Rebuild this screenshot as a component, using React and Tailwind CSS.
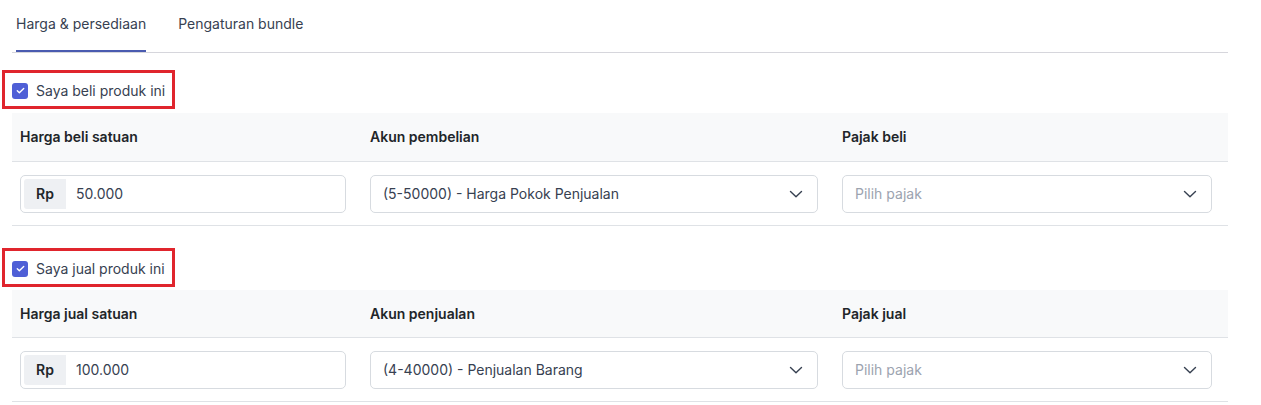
import React from 'react';

const Chevron = () => (
  <svg width="14" height="14" viewBox="0 0 14 14" fill="none" stroke="#374151" strokeWidth="1.4" strokeLinecap="round" strokeLinejoin="round">
    <path d="M1.5 4.5L7 9.8l5.5-5.3" />
  </svg>
);

const CheckLabel = ({ label }) => (
  <div className="ml-[2px] flex h-[39px] w-[173px] items-center border-[3px] border-[#e0252d] pl-[7px] pt-[2px]">
    <span className="flex h-4 w-4 items-center justify-center rounded-[3px] bg-[#4f5fd6]">
      <svg width="11" height="11" viewBox="0 0 24 24" fill="none" stroke="white" strokeWidth="3" strokeLinecap="round" strokeLinejoin="round">
        <path d="M5 12.5l4.5 4.5L19 7.5" />
      </svg>
    </span>
    <span className="ml-2 text-sm text-[#374151]">{label}</span>
  </div>
);

const Section = ({ label, cols, price, account, headClass }) => (
  <div>
    <CheckLabel label={label} />
    <div className={`ml-3 w-[1216px] ${headClass}`}>
      <div className="grid h-full grid-cols-[350px_472px_394px] items-center border-b border-[#dfe2e6] bg-[#f8f9fa] text-sm font-semibold text-[#212529]">
        {cols.map((c) => (
          <div key={c} className="pl-2">{c}</div>
        ))}
      </div>
    </div>
    <div className="ml-3 grid h-[64px] w-[1216px] grid-cols-[350px_472px_394px] items-center border-b border-[#dfe2e6] text-sm">
      <div className="pl-2 pr-4">
        <div className="flex h-[38px] items-stretch rounded-[5px] border border-[#d7dbe0] p-[3px]">
          <span className="flex w-[42px] items-center justify-center rounded-l-[3px] bg-[#eef0f3] font-semibold text-[#212529]">Rp</span>
          <span className="flex items-center pl-[10px] text-[#374151]">{price}</span>
        </div>
      </div>
      <div className="pl-2 pr-4">
        <div className="flex h-[38px] items-center justify-between rounded-[5px] border border-[#d7dbe0] pl-[12px] pr-[14px] text-[#374151]">
          <span>{account}</span>
          <Chevron />
        </div>
      </div>
      <div className="pl-2 pr-4">
        <div className="flex h-[38px] items-center justify-between rounded-[5px] border border-[#d7dbe0] pl-[12px] pr-[14px] text-[#9ca3af]">
          <span>Pilih pajak</span>
          <Chevron />
        </div>
      </div>
    </div>
  </div>
);

export default function App() {
  return (
    <div className="h-[405px] w-[1261px] bg-white" style={{ fontFamily: 'Inter, "Noto Sans", sans-serif' }}>
      <div className="ml-3 flex h-[53px] w-[1216px] items-end border-b border-[#d6d6dc] text-sm text-[#374151]">
        <div className="ml-1 flex h-full flex-col justify-center border-b-2 border-[#4a5bb0] pb-[3px]">Harga &amp; persediaan</div>
        <div className="ml-8 flex h-full flex-col justify-center pb-[5px]">Pengaturan bundle</div>
      </div>
      <div className="pt-[17px]">
        <Section
          label="Saya beli produk ini"
          cols={['Harga beli satuan', 'Akun pembelian', 'Pajak beli']}
          price="50.000"
          account="(5-50000) - Harga Pokok Penjualan"
          headClass="mt-1 h-[49px]"
        />
      </div>
      <div className="pt-[22px]">
        <Section
          label="Saya jual produk ini"
          cols={['Harga jual satuan', 'Akun penjualan', 'Pajak jual']}
          price="100.000"
          account="(4-40000) - Penjualan Barang"
          headClass="mt-[3px] h-[48px]"
        />
      </div>
    </div>
  );
}
